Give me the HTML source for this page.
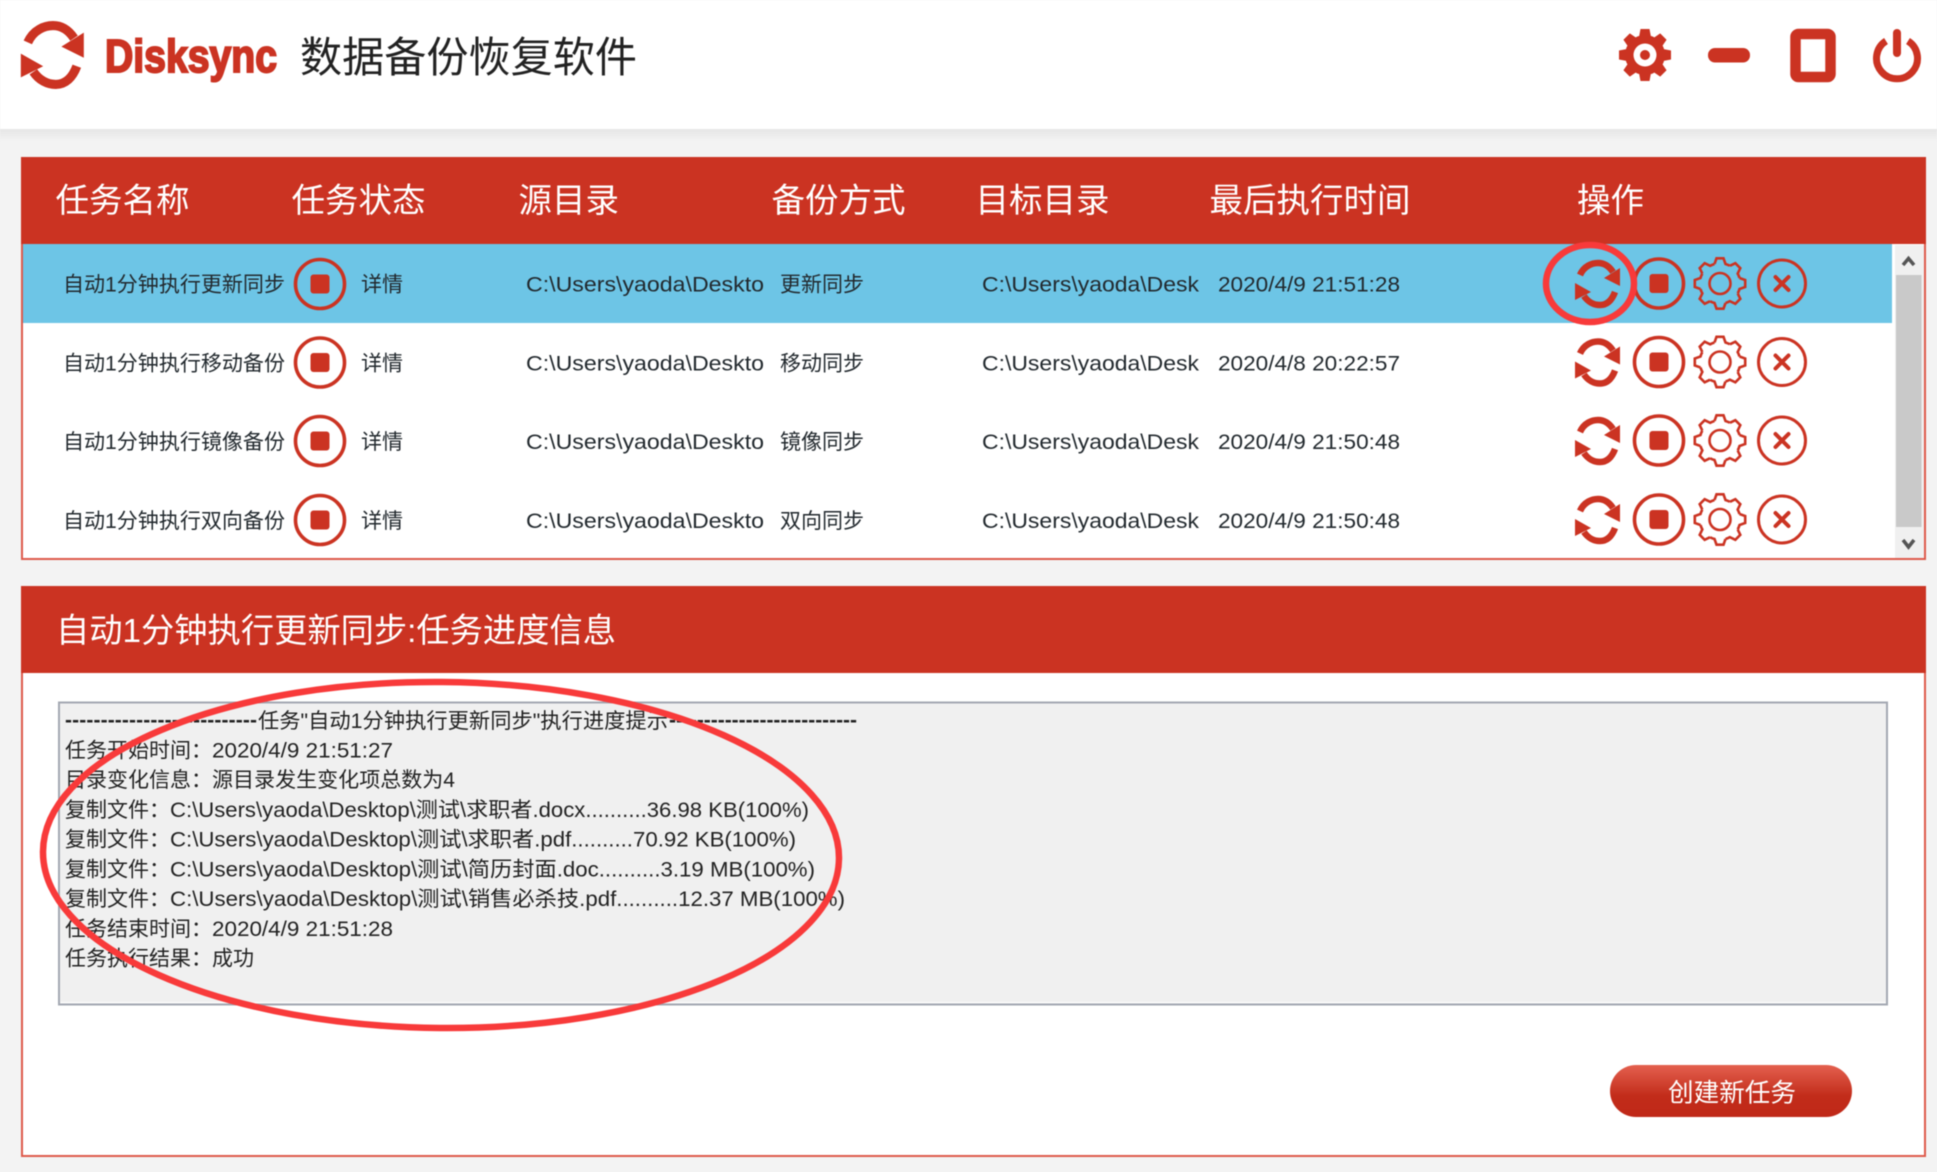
<!DOCTYPE html>
<html lang="zh-CN">
<head>
<meta charset="utf-8">
<title>Disksync 数据备份恢复软件</title>
<style>
html,body{margin:0;padding:0;background:#f3f3f3;width:1937px;height:1172px;overflow:hidden}
svg{display:block;position:absolute;left:0;top:0;filter:blur(0.5px)}
text{font-family:"Liberation Sans","Noto Sans CJK SC",sans-serif}
.h{font-size:33.5px;fill:#fff}
.r{font-size:21px;fill:#22292e}
.l{font-size:21px;fill:#222}
.d{font-size:21px;fill:#222;font-weight:700}
</style>
</head>
<body>
<svg width="1937" height="1172" viewBox="0 0 1937 1172" xmlns="http://www.w3.org/2000/svg">
<defs>
<linearGradient id="sh" x1="0" y1="0" x2="0" y2="1"><stop offset="0" stop-color="#e6e6e6"/><stop offset="1" stop-color="#f3f3f3"/></linearGradient>
<linearGradient id="btn" x1="0" y1="0" x2="0" y2="1"><stop offset="0" stop-color="#e4604f"/><stop offset=".6" stop-color="#c22c1a"/><stop offset="1" stop-color="#c02818"/></linearGradient>
<g id="sync">
<path d="M-18 -9C-14 -18 -6 -21 0 -21C6 -21 11 -18 15 -12" fill="none" stroke="#cb3322" stroke-width="6.500"/>
<path d="M22 -16V2L6 -6Z" fill="#cb3322"/>
<path d="M-14 12C-10 18 -4 21 2 21C9 21 14 16 17 8" fill="none" stroke="#cb3322" stroke-width="6.500"/>
<path d="M-23 -1V16L-7 8Z" fill="#cb3322"/>
</g>
<g id="stop">
<circle r="24.500" fill="none" stroke="#cb3322" stroke-width="3.600"/>
<rect x="-9.500" y="-9.500" width="19" height="19" rx="3" fill="#cb3322"/>
</g>
<path id="tooth" d="M-5.500 -19.500L-3.500 -25.200H3.500L5.500 -19.500A20 20 0 0 1 9.900 -17.700" fill="none" stroke="#cb3322" stroke-width="2.600"/>
<g id="gear">
<use href="#tooth"/><use href="#tooth" transform="rotate(45)"/><use href="#tooth" transform="rotate(90)"/><use href="#tooth" transform="rotate(135)"/><use href="#tooth" transform="rotate(180)"/><use href="#tooth" transform="rotate(225)"/><use href="#tooth" transform="rotate(270)"/><use href="#tooth" transform="rotate(315)"/>
<circle r="10.500" fill="none" stroke="#cb3322" stroke-width="2.600"/>
</g>
<path id="ft" d="M-6 -18L-4.500 -26H4.500L6 -18Z" fill="#cb3322"/>
<g id="close">
<circle r="23.500" fill="none" stroke="#cb3322" stroke-width="3"/>
<path d="M-6.500 -6.500L6.500 6.500M6.500 -6.500L-6.500 6.500" fill="none" stroke="#cb3322" stroke-width="4" stroke-linecap="round"/>
</g>
</defs>

<!-- top bar -->
<rect x="0" y="0" width="1937" height="129" fill="#fff"/>
<rect x="0" y="129" width="1937" height="12" fill="url(#sh)"/>
<use href="#sync" transform="translate(53 55) scale(1.400)"/>
<text x="105" y="72" font-size="46" font-weight="700" fill="#cb3322" stroke="#cb3322" stroke-width="2" textLength="172" lengthAdjust="spacingAndGlyphs">Disksync</text>
<text x="300" y="72" font-size="42" fill="#222" textLength="337" lengthAdjust="spacingAndGlyphs">数据备份恢复软件</text>

<!-- window icons -->
<g transform="translate(1645 55)">
<circle r="20" fill="#cb3322"/>
<use href="#ft"/><use href="#ft" transform="rotate(45)"/><use href="#ft" transform="rotate(90)"/><use href="#ft" transform="rotate(135)"/><use href="#ft" transform="rotate(180)"/><use href="#ft" transform="rotate(225)"/><use href="#ft" transform="rotate(270)"/><use href="#ft" transform="rotate(315)"/>
<circle r="11.500" fill="#fff"/><circle r="5" fill="#cb3322"/>
</g>
<rect x="1708" y="48" width="42" height="14.500" rx="7" fill="#cb3322"/>
<rect x="1795.500" y="34" width="35" height="43" rx="3" fill="none" stroke="#cb3322" stroke-width="10.500"/>
<path d="M1886 41A20.500 20.500 0 1 0 1908 41" fill="none" stroke="#cb3322" stroke-width="7"/>
<rect x="1893" y="29" width="8" height="28" rx="4" fill="#cb3322"/>

<!-- task panel -->
<rect x="22" y="158" width="1903" height="401" fill="#fff" stroke="#de5a4b" stroke-width="2"/>
<rect x="21" y="157" width="1905" height="87" fill="#cb3322"/>
<text class="h" x="55.500" y="212">任务名称</text>
<text class="h" x="291.500" y="212">任务状态</text>
<text class="h" x="518.500" y="212">源目录</text>
<text class="h" x="771.500" y="212">备份方式</text>
<text class="h" x="975.500" y="212">目标目录</text>
<text class="h" x="1209.500" y="212">最后执行时间</text>
<text class="h" x="1577" y="212">操作</text>

<rect x="23" y="244" width="1869" height="79" fill="#6dc5e6"/>

<!-- scrollbar -->
<rect x="1895" y="245" width="29" height="313" fill="#f0f0f0"/>
<rect x="1892" y="244" width="3" height="79" fill="#fff"/>
<rect x="1896" y="275" width="25.500" height="252" fill="#c9c9c9"/>
<path d="M1903 265L1908.500 258.500L1914 265" fill="none" stroke="#555" stroke-width="3.500"/>
<path d="M1903 540L1908.500 547L1914 540" fill="none" stroke="#555" stroke-width="3.500"/>

<!-- rows -->
<g>
<text class="r" x="63" y="291.500" textLength="222" lengthAdjust="spacingAndGlyphs">自动1分钟执行更新同步</text>
<use href="#stop" transform="translate(320 284)"/>
<text class="r" x="361" y="291.500">详情</text>
<text class="r" x="526" y="291.500" textLength="238" lengthAdjust="spacingAndGlyphs">C:\Users\yaoda\Deskto</text>
<text class="r" x="780" y="291.500">更新同步</text>
<text class="r" x="982" y="291.500" textLength="217" lengthAdjust="spacingAndGlyphs">C:\Users\yaoda\Desk</text>
<text class="r" x="1218" y="291.500" textLength="182" lengthAdjust="spacingAndGlyphs">2020/4/9 21:51:28</text>
<use href="#sync" transform="translate(1598 284)"/><use href="#stop" transform="translate(1659 283.500)"/><use href="#gear" transform="translate(1720 283.500)"/><use href="#close" transform="translate(1782 283.500)"/>
</g>
<g>
<text class="r" x="63" y="370.500" textLength="222" lengthAdjust="spacingAndGlyphs">自动1分钟执行移动备份</text>
<use href="#stop" transform="translate(320 362.500)"/>
<text class="r" x="361" y="370.500">详情</text>
<text class="r" x="526" y="370.500" textLength="238" lengthAdjust="spacingAndGlyphs">C:\Users\yaoda\Deskto</text>
<text class="r" x="780" y="370.500">移动同步</text>
<text class="r" x="982" y="370.500" textLength="217" lengthAdjust="spacingAndGlyphs">C:\Users\yaoda\Desk</text>
<text class="r" x="1218" y="370.500" textLength="182" lengthAdjust="spacingAndGlyphs">2020/4/8 20:22:57</text>
<use href="#sync" transform="translate(1598 362.500)"/><use href="#stop" transform="translate(1659 362)"/><use href="#gear" transform="translate(1720 362)"/><use href="#close" transform="translate(1782 362)"/>
</g>
<g>
<text class="r" x="63" y="449" textLength="222" lengthAdjust="spacingAndGlyphs">自动1分钟执行镜像备份</text>
<use href="#stop" transform="translate(320 441)"/>
<text class="r" x="361" y="449">详情</text>
<text class="r" x="526" y="449" textLength="238" lengthAdjust="spacingAndGlyphs">C:\Users\yaoda\Deskto</text>
<text class="r" x="780" y="449">镜像同步</text>
<text class="r" x="982" y="449" textLength="217" lengthAdjust="spacingAndGlyphs">C:\Users\yaoda\Desk</text>
<text class="r" x="1218" y="449" textLength="182" lengthAdjust="spacingAndGlyphs">2020/4/9 21:50:48</text>
<use href="#sync" transform="translate(1598 441)"/><use href="#stop" transform="translate(1659 440.500)"/><use href="#gear" transform="translate(1720 440.500)"/><use href="#close" transform="translate(1782 440.500)"/>
</g>
<g>
<text class="r" x="63" y="528" textLength="222" lengthAdjust="spacingAndGlyphs">自动1分钟执行双向备份</text>
<use href="#stop" transform="translate(320 520)"/>
<text class="r" x="361" y="528">详情</text>
<text class="r" x="526" y="528" textLength="238" lengthAdjust="spacingAndGlyphs">C:\Users\yaoda\Deskto</text>
<text class="r" x="780" y="528">双向同步</text>
<text class="r" x="982" y="528" textLength="217" lengthAdjust="spacingAndGlyphs">C:\Users\yaoda\Desk</text>
<text class="r" x="1218" y="528" textLength="182" lengthAdjust="spacingAndGlyphs">2020/4/9 21:50:48</text>
<use href="#sync" transform="translate(1598 520)"/><use href="#stop" transform="translate(1659 519.500)"/><use href="#gear" transform="translate(1720 519.500)"/><use href="#close" transform="translate(1782 519.500)"/>
</g>

<!-- highlight ring on row 1 -->
<ellipse cx="1590" cy="283.500" rx="44" ry="38.500" fill="none" stroke="#f83a3a" stroke-width="6.500"/>

<!-- progress panel -->
<rect x="22" y="587" width="1903" height="569" fill="#fff" stroke="#de5a4b" stroke-width="2"/>
<rect x="21" y="586" width="1905" height="87" fill="#cb3322"/>
<text class="h" x="56" y="642" textLength="560" lengthAdjust="spacingAndGlyphs">自动1分钟执行更新同步:任务进度信息</text>

<rect x="59" y="702.500" width="1828" height="302" fill="#f0f0f0" stroke="#a3a8b2" stroke-width="2"/>
<rect x="60.500" y="1002" width="1825" height="1" fill="#fff"/>

<text class="d" x="65" y="727" textLength="192" lengthAdjust="spacing">---------------------------</text>
<text class="l" x="258" y="728" textLength="410" lengthAdjust="spacingAndGlyphs">任务"自动1分钟执行更新同步"执行进度提示</text>
<text class="d" x="669" y="727" textLength="188" lengthAdjust="spacing">---------------------------</text>

<text class="l" x="65" y="757.500">任务开始时间：</text>
<text class="l" x="212" y="757.500" textLength="181" lengthAdjust="spacingAndGlyphs">2020/4/9 21:51:27</text>
<text class="l" x="65" y="787">目录变化信息：</text>
<text class="l" x="212" y="787" textLength="243" lengthAdjust="spacingAndGlyphs">源目录发生变化项总数为4</text>
<text class="l" x="65" y="817">复制文件：</text>
<text class="l" x="170" y="817" textLength="639" lengthAdjust="spacingAndGlyphs">C:\Users\yaoda\Desktop\测试\求职者.docx..........36.98 KB(100%)</text>
<text class="l" x="65" y="846.500">复制文件：</text>
<text class="l" x="170" y="846.500" textLength="626" lengthAdjust="spacingAndGlyphs">C:\Users\yaoda\Desktop\测试\求职者.pdf..........70.92 KB(100%)</text>
<text class="l" x="65" y="876.500">复制文件：</text>
<text class="l" x="170" y="876.500" textLength="645" lengthAdjust="spacingAndGlyphs">C:\Users\yaoda\Desktop\测试\简历封面.doc..........3.19 MB(100%)</text>
<text class="l" x="65" y="906">复制文件：</text>
<text class="l" x="170" y="906" textLength="675" lengthAdjust="spacingAndGlyphs">C:\Users\yaoda\Desktop\测试\销售必杀技.pdf..........12.37 MB(100%)</text>
<text class="l" x="65" y="936">任务结束时间：</text>
<text class="l" x="212" y="936" textLength="181" lengthAdjust="spacingAndGlyphs">2020/4/9 21:51:28</text>
<text class="l" x="65" y="965.500">任务执行结果：</text>
<text class="l" x="212" y="965.500">成功</text>

<!-- big annotation ellipse -->
<ellipse cx="441" cy="855" rx="398" ry="173" fill="none" stroke="#f83a3a" stroke-width="6.500" transform="rotate(0.5 441 855)"/>

<!-- button -->
<rect x="1610" y="1065" width="242" height="52" rx="26" fill="url(#btn)"/>
<text x="1668" y="1101.500" font-size="25.600" fill="#fff">创建新任务</text>
</svg>
</body>
</html>
